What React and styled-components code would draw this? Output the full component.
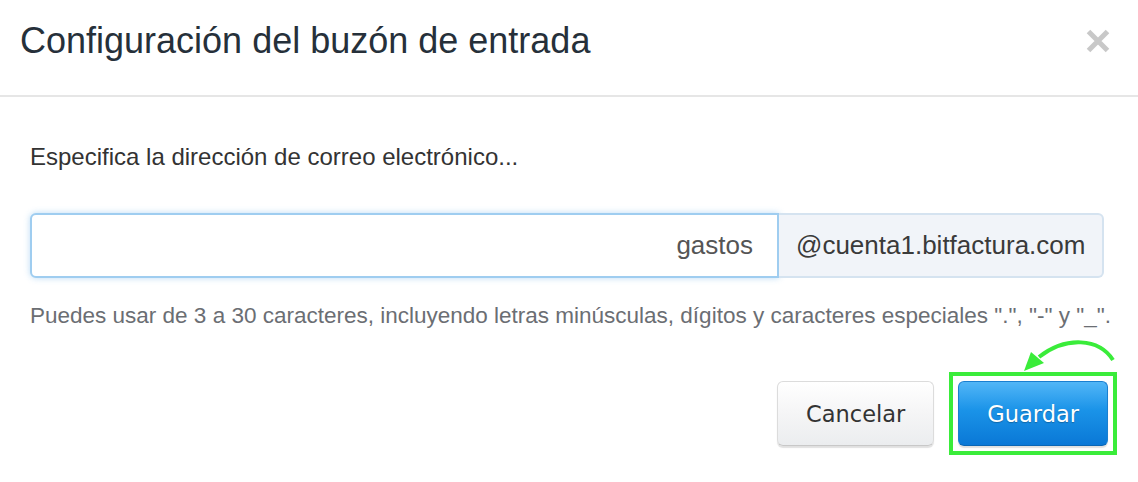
import React from "react";
import styled, { createGlobalStyle } from "styled-components";

const GlobalStyle = createGlobalStyle`
  html, body {
    margin: 0;
    padding: 0;
    background: #ffffff;
  }
  body {
    font-family: "Liberation Sans", Arial, sans-serif;
  }
`;

function CloseIcon() {
  return (
    <svg width="24" height="24" viewBox="0 0 24 24">
      <path d="M2.5 2.5 L21.5 21.5 M21.5 2.5 L2.5 21.5" stroke="#c8c8c8" strokeWidth="5" />
    </svg>
  );
}

function App() {
  return (
    <Modal>
      <GlobalStyle />
      <Header>
        <Title>Configuración del buzón de entrada</Title>
        <CloseButton aria-label="Cerrar">
          <CloseIcon />
        </CloseButton>
      </Header>

      <Body>
        <Lead>Especifica la dirección de correo electrónico...</Lead>

        <InputGroup>
          <TextInput defaultValue="gastos" />
          <Addon>@cuenta1.bitfactura.com</Addon>
        </InputGroup>

        <Help>
          Puedes usar de 3 a 30 caracteres, incluyendo letras minúsculas, dígitos y
          caracteres especiales ".", "-" y "_".
        </Help>
      </Body>

      <Footer>
        <Button>Cancelar</Button>
        <Highlighted>
          <Button primary>Guardar</Button>
          <Arrow width="100" height="40" viewBox="0 0 100 40">
            <path d="M92 28 C 78 6, 45 4, 18 25" fill="none" stroke="#3aec3a" strokeWidth="4" />
            <polygon points="3,39 10,20 23,31" fill="#3aec3a" />
          </Arrow>
        </Highlighted>
      </Footer>
    </Modal>
  );
}

const Modal = styled.div`
  width: 1138px;
  height: 482px;
  background: #fff;
  position: relative;
  overflow: hidden;
`;

const Header = styled.div`
  display: flex;
  align-items: center;
  justify-content: space-between;
  box-sizing: border-box;
  height: 97px;
  padding: 0 28px 14px 20px;
  border-bottom: 2px solid #e6e6e6;
`;

const Title = styled.h1`
  margin: 0;
  font-size: 36px;
  font-weight: normal;
  color: #26303a;
  line-height: 1.2;
`;

const CloseButton = styled.button`
  display: flex;
  border: 0;
  padding: 0;
  background: none;
  cursor: pointer;
`;

const Body = styled.div`
  padding: 46px 34px 0 30px;
`;

const Lead = styled.p`
  margin: 0;
  font-size: 24px;
  line-height: 28px;
  color: #333;
`;

const InputGroup = styled.div`
  display: flex;
  margin-top: 42px;
  height: 65px;
`;

const TextInput = styled.input`
  flex: 1;
  min-width: 0;
  box-sizing: border-box;
  height: 65px;
  padding: 0 24px;
  border: 2px solid #9fcdf0;
  border-radius: 6px 0 0 6px;
  box-shadow: 0 0 6px rgba(102, 175, 233, 0.45);
  font-family: "Liberation Sans", Arial, sans-serif;
  font-size: 26px;
  color: #555;
  text-align: right;
  outline: none;
`;

const Addon = styled.div`
  display: flex;
  align-items: center;
  box-sizing: border-box;
  width: 325px;
  padding: 0 17px;
  background: #f1f4f9;
  border: 2px solid #d5e3f0;
  border-left: 0;
  border-radius: 0 6px 6px 0;
  font-size: 26px;
  color: #3a3a3a;
`;

const Help = styled.p`
  margin: 25px 0 0;
  font-size: 22.5px;
  line-height: 26px;
  color: #6b6e73;
  white-space: nowrap;
`;

const Footer = styled.div`
  display: flex;
  justify-content: flex-end;
  align-items: center;
  gap: 15px;
  padding: 43px 21px 0 0;
`;

const Button = styled.button`
  box-sizing: border-box;
  height: 65px;
  padding: 0 28px;
  border-radius: 6px;
  font-family: "DejaVu Sans", Verdana, sans-serif;
  font-size: 22.5px;
  cursor: pointer;
  color: ${(p) => (p.primary ? "#fff" : "#333")};
  text-shadow: ${(p) => (p.primary ? "0 1px 1px rgba(0,0,0,0.25)" : "none")};
  border: 1px solid ${(p) => (p.primary ? "#1a7fd0" : "#dcdcdc")};
  border-bottom-color: ${(p) => (p.primary ? "#0a66b5" : "#c8c8c8")};
  background: ${(p) =>
    p.primary
      ? "linear-gradient(to bottom, #52b6f7 0%, #1a93e8 45%, #0a78d6 100%)"
      : "linear-gradient(to bottom, #ffffff 0%, #f5f5f6 50%, #ebedef 100%)"};
  box-shadow: 0 2px 1px rgba(0, 0, 0, 0.12);
`;

const Highlighted = styled.div`
  position: relative;
  display: flex;
  padding: 5px;
  border: 4px solid #3aec3a;
`;

const Arrow = styled.svg`
  position: absolute;
  right: -8px;
  top: -44px;
`;

export default App;
